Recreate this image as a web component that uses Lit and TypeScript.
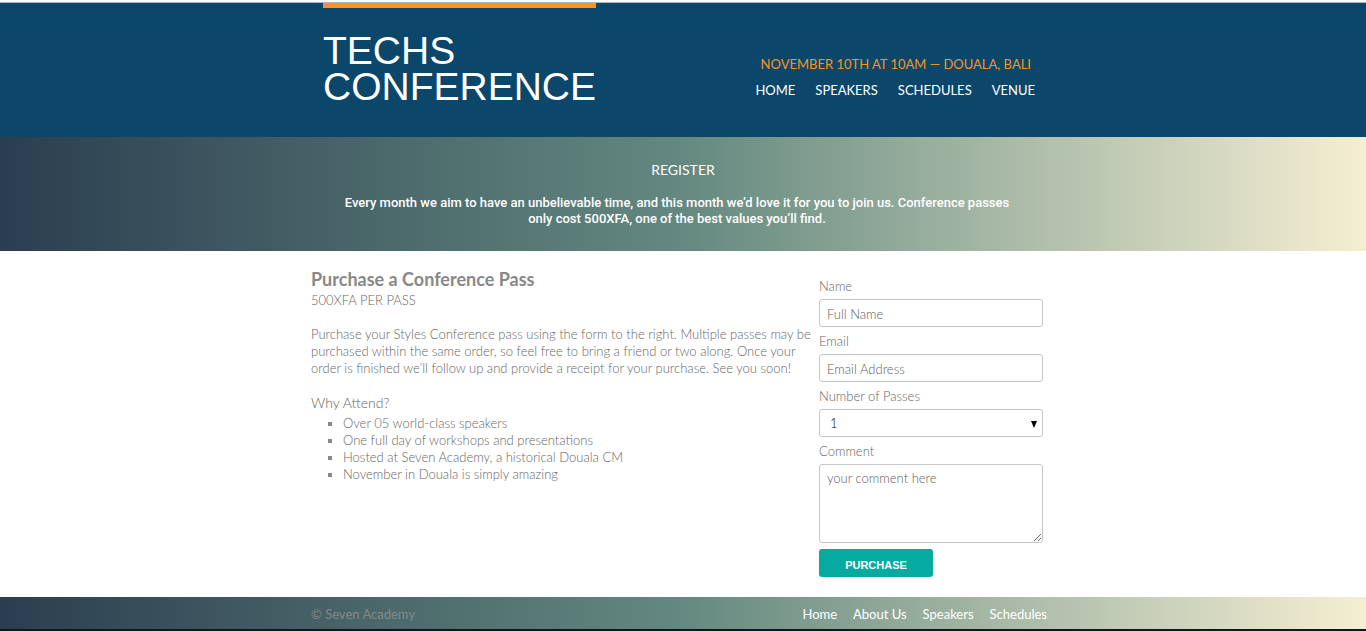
import { LitElement, html, css } from "lit";
import { customElement, property } from "lit/decorators.js";

interface NavItem {
  label: string;
  href: string;
}

@customElement("site-header")
class SiteHeader extends LitElement {
  @property({ attribute: false }) items: NavItem[] = [];

  static styles = css`
    :host {
      display: block;
      background: #0b466b;
      border-top: 1px solid #b4b6ba;
      margin-top: 2px;
    }
    .row {
      box-sizing: border-box;
      max-width: 744px;
      margin: 0 auto;
      padding: 0 20px 0 12px;
      display: flex;
      justify-content: space-between;
      min-height: 134px;
    }
    .logo {
      margin: 0;
      padding-top: 25px;
      border-top: 5px solid #f89522;
      align-self: flex-start;
      font: 400 39px/36px "Liberation Sans", Arial, sans-serif;
      color: #fff;
    }
    .logo a {
      color: inherit;
      text-decoration: none;
    }
    .side {
      padding-top: 48px;
      display: flex;
      flex-direction: column;
      align-items: flex-end;
      font-size: 13px;
      line-height: 26px;
    }
    .tagline {
      margin: 0;
      padding-right: 4px;
      color: #f89522;
    }
    nav {
      display: flex;
      gap: 20px;
      font-size: 13px;
    }
    nav a {
      color: #fff;
      text-decoration: none;
    }
  `;

  render() {
    return html`
      <header class="row">
        <h1 class="logo"><a href="#home">TECHS<br />CONFERENCE</a></h1>
        <div class="side">
          <p class="tagline">NOVEMBER 10TH AT 10AM — DOUALA, BALI</p>
          <nav aria-label="Main">
            ${this.items.map((i) => html`<a href=${i.href}>${i.label}</a>`)}
          </nav>
        </div>
      </header>
    `;
  }
}

@customElement("register-form")
class RegisterForm extends LitElement {
  static styles = css`
    :host {
      display: block;
    }
    form {
      display: flex;
      flex-direction: column;
      align-items: flex-start;
      font-size: 13px;
    }
    label {
      line-height: 25px;
    }
    .field {
      box-sizing: border-box;
      width: 100%;
      height: 28px;
      margin: 0 0 2px;
      padding: 1px 7px 0;
      border: 1px solid #c4c6c8;
      border-radius: 3px;
      background: #fff;
      color: #000;
      font: inherit;
    }
    .field::placeholder {
      color: #606060;
      opacity: 1;
    }
    .picker {
      display: grid;
      width: 100%;
      align-items: center;
    }
    .picker > * {
      grid-area: 1 / 1;
    }
    .picker select {
      appearance: none;
      padding-left: 10px;
    }
    .picker svg {
      justify-self: end;
      margin-right: 6px;
      pointer-events: none;
    }
    textarea.field {
      height: 79px;
      padding: 5px 7px;
      margin-bottom: 6px;
      resize: vertical;
      display: block;
    }
    button {
      width: 114px;
      height: 28px;
      padding: 4px 0 0;
      border: 0;
      border-radius: 3px;
      background: #05aaa0;
      color: #fff;
      font: 700 11px/16px "Liberation Sans", Arial, sans-serif;
    }
  `;

  render() {
    return html`
      <form>
        <label for="name">Name</label>
        <input class="field" id="name" type="text" placeholder="Full Name" />
        <label for="email">Email</label>
        <input class="field" id="email" type="email" placeholder="Email Address" />
        <label for="passes">Number of Passes</label>
        <div class="picker">
          <select class="field" id="passes">
            <option selected>1</option>
            <option>2</option>
            <option>3</option>
            <option>4</option>
            <option>5</option>
          </select>
          <svg width="6" height="7" viewBox="0 0 6 7" aria-hidden="true">
            <path d="M0 0h6L3 7z" fill="#000" />
          </svg>
        </div>
        <label for="comment">Comment</label>
        <textarea class="field" id="comment" placeholder="your comment here"></textarea>
        <button type="button">PURCHASE</button>
      </form>
    `;
  }
}

@customElement("app-root")
class AppRoot extends LitElement {
  private mainNav: NavItem[] = [
    { label: "HOME", href: "#home" },
    { label: "SPEAKERS", href: "#speakers" },
    { label: "SCHEDULES", href: "#schedules" },
    { label: "VENUE", href: "#venue" },
  ];

  private footerNav: NavItem[] = [
    { label: "Home", href: "#home" },
    { label: "About Us", href: "#about" },
    { label: "Speakers", href: "#speakers" },
    { label: "Schedules", href: "#schedules" },
  ];

  private reasons = [
    "Over 05 world-class speakers",
    "One full day of workshops and presentations",
    "Hosted at Seven Academy, a historical Douala CM",
    "November in Douala is simply amazing",
  ];

  static styles = css`
    :host {
      display: flow-root;
      background: #fff;
      color: #666;
      font-family: Lato, sans-serif;
      font-size: 13px;
      font-weight: 300;
      line-height: 17px;
    }
    site-header {
      font-weight: 400;
    }
    .band {
      background: linear-gradient(to right, #2b3e50, #648980 50%, #f5efd2);
      color: #fff;
    }
    .intro {
      padding: 24px 0;
      text-align: center;
    }
    .intro h2 {
      margin: 0 0 16px;
      font-size: 14px;
      line-height: 18px;
      font-weight: 400;
    }
    .intro p {
      box-sizing: border-box;
      max-width: 744px;
      margin: 0 auto;
      padding: 0 42px 0 30px;
      font: 500 13px/16px Roboto, "Liberation Sans", sans-serif;
    }
    .content {
      max-width: 744px;
      margin: 0 auto;
      padding-bottom: 20px;
      display: grid;
      grid-template-columns: 1fr 236px;
      column-gap: 4px;
    }
    .details {
      padding-top: 17px;
    }
    .details h3 {
      margin: 0;
      font-size: 18px;
      line-height: 23px;
      font-weight: 700;
      color: #888;
    }
    .details h4 {
      margin: 0 0 16px;
      font: inherit;
      line-height: 19px;
    }
    .details p {
      margin: 0 0 16px;
    }
    .details h5 {
      margin: 0 0 2px;
      font-size: 14px;
      line-height: 20px;
      font-weight: 300;
    }
    .details ul {
      margin: 0;
      padding-left: 32px;
      list-style: square;
    }
    .details li::marker {
      color: #888;
    }
    register-form {
      padding: 23px 12px 0 0;
    }
    .footer {
      border-bottom: 2px solid #11171a;
    }
    .footer-row {
      box-sizing: border-box;
      max-width: 744px;
      margin: 0 auto;
      padding: 9px 8px 6px 0;
      display: flex;
      justify-content: space-between;
      font-weight: 400;
    }
    .footer small {
      font-size: 13px;
      color: #888;
    }
    .footer nav {
      display: flex;
      gap: 16px;
    }
    .footer a {
      color: #fff;
      text-decoration: none;
    }
  `;

  render() {
    return html`
      <site-header .items=${this.mainNav}></site-header>
      <section class="band intro">
        <h2>REGISTER</h2>
        <p>
          Every month we aim to have an unbelievable time, and this month we’d love it
          for you to join us. Conference passes only cost 500XFA, one of the best
          values you’ll find.
        </p>
      </section>
      <main class="content">
        <section class="details">
          <h3>Purchase a Conference Pass</h3>
          <h4>500XFA PER PASS</h4>
          <p>
            Purchase your Styles Conference pass using the form to the right. Multiple
            passes may be<br />
            purchased within the same order, so feel free to bring a friend or two
            along. Once your<br />
            order is finished we’ll follow up and provide a receipt for your purchase.
            See you soon!
          </p>
          <h5>Why Attend?</h5>
          <ul>
            ${this.reasons.map((r) => html`<li>${r}</li>`)}
          </ul>
        </section>
        <register-form></register-form>
      </main>
      <footer class="band footer">
        <div class="footer-row">
          <small>© Seven Academy</small>
          <nav aria-label="Footer">
            ${this.footerNav.map((i) => html`<a href=${i.href}>${i.label}</a>`)}
          </nav>
        </div>
      </footer>
    `;
  }
}
